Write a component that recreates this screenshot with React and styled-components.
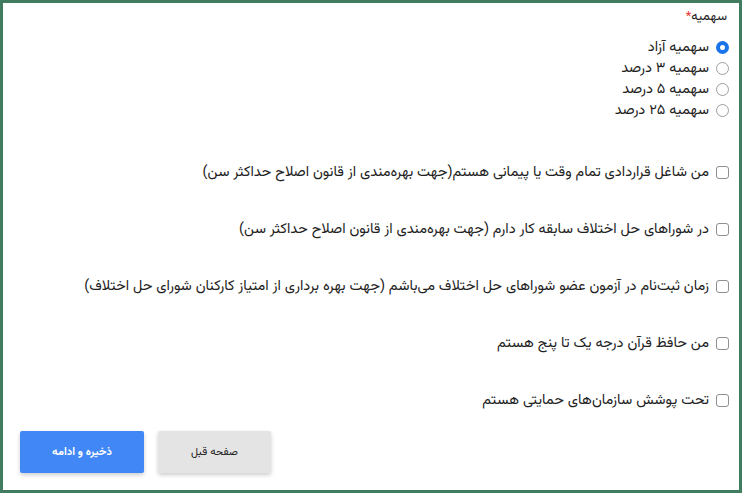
import React from 'react';
import styled, { createGlobalStyle } from 'styled-components';

const Global = createGlobalStyle`
  html, body { margin: 0; padding: 0; background: #fff; }
  * { box-sizing: border-box; }
`;

const Frame = styled.div`
  width: 742px;
  height: 493px;
  border: 3px solid #417c61;
  direction: rtl;
  font-family: "Vazirmatn", "DejaVu Sans", sans-serif;
  color: #222;
  padding: 5px 10px 0 16px;
  display: flex;
  flex-direction: column;
`;

const Label = styled.div`
  font-size: 13px;
  line-height: 18px;
  padding-right: 2px;
  & span { color: #e53935; }
`;

const RadioGroup = styled.div`
  display: flex;
  flex-direction: column;
  margin-top: 11px;
`;

const Option = styled.label`
  display: flex;
  align-items: center;
  gap: 7px;
  height: 21px;
  font-size: 14.5px;
`;

const Radio = styled.span`
  width: 13px;
  height: 13px;
  border-radius: 50%;
  border: ${p => (p.checked ? '4px solid #1a73e8' : '1px solid #9e9e9e')};
  background: #fff;
  flex-shrink: 0;
`;

const Checks = styled.div`
  display: flex;
  flex-direction: column;
  gap: 35px;
  margin-top: 40px;
`;

const CheckRow = styled.label`
  display: flex;
  align-items: center;
  gap: 7px;
  height: 22px;
  font-size: 14.5px;
`;

const Box = styled.span`
  width: 13px;
  height: 13px;
  border: 1px solid #8f8f8f;
  border-radius: 3px;
  flex-shrink: 0;
`;

const Actions = styled.div`
  display: flex;
  direction: ltr;
  gap: 14px;
  margin-top: 20px;
  padding-left: 1px;
`;

const Button = styled.button`
  height: 42px;
  width: ${p => p.w}px;
  border: none;
  border-radius: 2px;
  font-family: inherit;
  font-size: 11px;
  font-weight: ${p => (p.primary ? 700 : 400)};
  color: ${p => (p.primary ? '#fff' : '#222')};
  background: ${p => (p.primary ? '#4187f5' : '#e4e4e4')};
  box-shadow: 0 2px 4px rgba(0, 0, 0, 0.2);
  direction: rtl;
`;

const radios = ['سهمیه آزاد', 'سهمیه ۳ درصد', 'سهمیه ۵ درصد', 'سهمیه ۲۵ درصد'];

const checks = [
  'من شاغل قراردادی تمام وقت یا پیمانی هستم(جهت بهره‌مندی از قانون اصلاح حداکثر سن)',
  'در شوراهای حل اختلاف سابقه کار دارم (جهت بهره‌مندی از قانون اصلاح حداکثر سن)',
  'زمان ثبت‌نام در آزمون عضو شوراهای حل اختلاف می‌باشم (جهت بهره برداری از امتیاز کارکنان شورای حل اختلاف)',
  'من حافظ قرآن درجه یک تا پنج هستم',
  'تحت پوشش سازمان‌های حمایتی هستم',
];

export default function App() {
  return (
    <>
      <Global />
      <Frame>
        <Label>سهمیه<span>*</span></Label>
        <RadioGroup>
          {radios.map((r, i) => (
            <Option key={r}>
              <Radio checked={i === 0} />
              {r}
            </Option>
          ))}
        </RadioGroup>
        <Checks>
          {checks.map(c => (
            <CheckRow key={c}>
              <Box />
              {c}
            </CheckRow>
          ))}
        </Checks>
        <Actions>
          <Button primary w={124}>ذخیره و ادامه</Button>
          <Button w={113}>صفحه قبل</Button>
        </Actions>
      </Frame>
    </>
  );
}
